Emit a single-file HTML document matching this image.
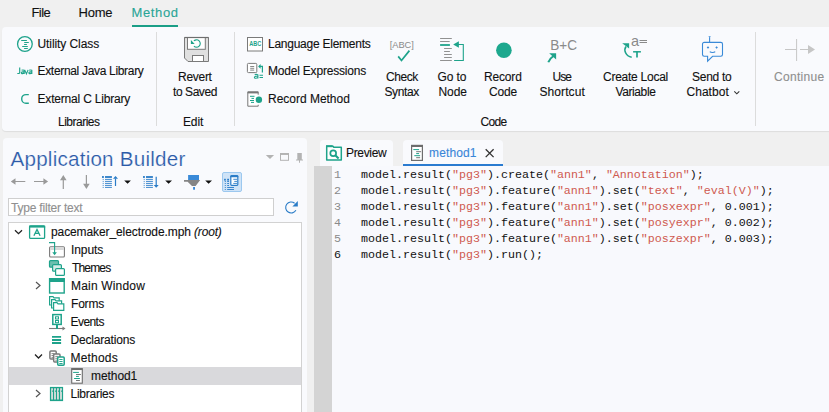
<!DOCTYPE html>
<html><head><meta charset="utf-8">
<style>
*{margin:0;padding:0;box-sizing:border-box}
html,body{width:829px;height:412px;overflow:hidden;background:#f0f0f0;font-family:"Liberation Sans",sans-serif;color:#1e1e1e}
.a{position:absolute;white-space:nowrap;-webkit-text-stroke:0.12px currentColor}
.t{position:absolute;white-space:nowrap;font-size:11.5px;line-height:14px;color:#111}
.c{position:absolute;white-space:nowrap;font-size:11.5px;line-height:14px;text-align:center;color:#111}
.tb{position:absolute;white-space:nowrap;font-size:13px;line-height:16px;top:5px}
.sep{position:absolute;width:1px;background:#dcdcdc;top:32px;height:94px}
.tr{position:absolute;white-space:nowrap;font-size:11.7px;line-height:14px;color:#111}
.code{position:absolute;left:361px;font-family:"Liberation Mono",monospace;font-size:11.667px;line-height:16px;white-space:pre;color:#111}
.ln{position:absolute;left:334px;font-family:"Liberation Mono",monospace;font-size:11.667px;line-height:16px;color:#8a8a8a}
.s{color:#cf5a50}
#ov{position:absolute;left:0;top:0}
</style></head><body>

<!-- ===== backgrounds ===== -->
<div class="a" style="left:132px;top:25px;width:46px;height:2px;background:#1a9e86"></div>
<div class="a" style="left:2px;top:27px;width:840px;height:104px;background:#f9fafd;border-radius:4px;box-shadow:0 1px 1px rgba(0,0,0,0.08)"></div>
<div class="sep" style="left:156px"></div>
<div class="sep" style="left:234px"></div>
<div class="sep" style="left:755px"></div>

<div class="a" style="left:3px;top:138px;width:304px;height:290px;background:#f9fafd;border-radius:4px"></div>
<div class="a" style="left:222px;top:172px;width:20px;height:20px;background:#cfe3f7;border:1px solid #9cc8ef;border-radius:2px"></div>
<div class="a" style="left:8px;top:198px;width:266px;height:18px;background:#fff;border:1px solid #cfcfcf"></div>
<div class="a" style="left:8px;top:222px;width:294px;height:200px;background:#fff;border:1px solid #d2d2d2"></div>
<div class="a" style="left:9px;top:367px;width:292px;height:18px;background:#d9d9dc"></div>

<div class="a" style="left:320px;top:140px;width:73px;height:26px;background:#f9fafd;border-radius:4px 4px 0 0"></div>
<div class="a" style="left:403px;top:140px;width:100px;height:26px;background:#f9fafd;border-radius:4px 4px 0 0"></div>
<div class="a" style="left:403px;top:164px;width:100px;height:2px;background:#2a7bd0"></div>
<div class="a" style="left:314px;top:166px;width:520px;height:250px;background:#f8f9fd"></div>
<div class="a" style="left:314px;top:166px;width:18px;height:250px;background:#d4d4d4"></div>

<!-- ===== icons overlay (page coordinates) ===== -->
<svg id="ov" width="829" height="412" viewBox="0 0 829 412">
 <g fill="none" stroke-linecap="butt">
 <!-- Utility class -->
 <circle cx="24.9" cy="44" r="7.35" stroke="#1ea38b" stroke-width="1.3"/>
 <path d="M21.2 40.5h5.7M24.2 42.5h4.6M24.1 44.5h2.8M22.2 46.5h5.6M24.1 48.5h3.7" stroke="#1ea38b" stroke-width="1.05"/>
 <!-- C library -->
 <path d="M28.8 94.6H26A4.3 4.3 0 0 0 26 103.2H28.8" stroke="#1ea38b" stroke-width="1.4"/>
 </g>
 <path d="M19.7 67.6V72.5Q19.7 73.5 18.6 73.5H17.3M21.6 70.3Q23 69.7 24.2 70.3V74M24.2 71.8H22.7Q21.3 71.8 21.3 72.8Q21.3 73.7 22.6 73.6Q23.6 73.5 24.2 72.9M24.7 69.9L26.4 73.9L28.1 69.9M29.2 70.3Q30.6 69.7 31.8 70.3V74M31.8 71.8H30.3Q28.9 71.8 28.9 72.8Q28.9 73.7 30.2 73.6Q31.2 73.5 31.8 72.9" fill="none" stroke="#1ea38b" stroke-width="1.15"/>

 <!-- floppy -->
 <path d="M184.5 37.5H208.5V61.5H188L184.5 58Z" fill="#e0e0e0" stroke="#7a7a7a" stroke-width="1"/>
 <rect x="187.5" y="37.5" width="17.8" height="11.8" fill="#fff" stroke="#7a7a7a" stroke-width="1"/>
 <path d="M184.5 37.5H208.5" stroke="#6e6e6e" stroke-width="1.2"/>
 <rect x="192.5" y="55.5" width="11" height="6" fill="#fff" stroke="#7a7a7a" stroke-width="1"/>
 <path d="M193.9 46.1A3.7 3.7 0 1 0 193.9 40.9" fill="none" stroke="#1ea38b" stroke-width="1.15"/>
 <path d="M190.9 40.1V44H194.7Z" fill="#1ea38b"/>

 <!-- Language elements -->
 <rect x="247.5" y="37.5" width="15" height="13.5" fill="#fff" stroke="#7a7a7a" stroke-width="1"/>
 <text x="255.2" y="46" font-family="Liberation Sans" font-size="7" font-weight="bold" fill="#1ea38b" text-anchor="middle" textLength="12" lengthAdjust="spacingAndGlyphs">ABC</text>
 <!-- Model expressions -->
 <rect x="247.4" y="63.4" width="9.4" height="9.2" rx="1" fill="#fff" stroke="#7a7a7a" stroke-width="1"/>
 <path d="M250.2 66.5h4M250.2 68.3h4M250.2 70.1h4" stroke="#7a7a7a" stroke-width="0.9"/>
 <path d="M262.4 72.5V66.4H259" fill="none" stroke="#1ea38b" stroke-width="1.2"/>
 <path d="M258.1 66.4L260.6 64V68.8Z" fill="#1ea38b"/>
 <path d="M254.7 74.9Q256.3 73.9 257.9 74.9V78.4M257.9 76.3H256.1Q254.4 76.3 254.4 77.4Q254.4 78.4 256 78.3Q257.3 78.2 257.9 77.3M259.5 75.3H263M259.5 77.5H263" fill="none" stroke="#1ea38b" stroke-width="1.1"/>
 <!-- Record method -->
 <path d="M258.2 94.7V91.8H247.8V106.2H258.2V104.8" fill="#fff" stroke="#777" stroke-width="1"/>
 <path d="M247.8 92.6H258.2" stroke="#777" stroke-width="1.6"/>
 <path d="M250 96.3h4.5M251.5 98.4h2.5M250 100.5h4M251 102.4h3" stroke="#1ea38b" stroke-width="1"/>
 <circle cx="258.9" cy="99.7" r="3.2" fill="#1ea38b"/>

 <!-- Check syntax -->
 <text x="401.8" y="48" font-family="Liberation Sans" font-size="9.5" fill="#8a8a8a" text-anchor="middle" textLength="24.2" lengthAdjust="spacingAndGlyphs">[ABC]</text>
 <path d="M398.2 56.4L401.5 60.5L409.4 50.6" fill="none" stroke="#1ea38b" stroke-width="1.7"/>

 <!-- Go to node -->
 <path d="M440.1 38.5h11.7M440.1 41.5h9.6M444.1 48.5h7.7M444.1 51.5h5.8M444.1 54.5h7.7M444.1 57.5h7.7M440.1 60.5h11.7" stroke="#858585" stroke-width="0.9"/>
 <path d="M440.1 45h9.8" stroke="#1ea38b" stroke-width="1.8"/>
 <path d="M454.1 60.5H463.3V44.5H457" fill="none" stroke="#1ea38b" stroke-width="1.1"/>
 <path d="M453.2 44.5L458.9 41.2V47.8Z" fill="#1ea38b"/>

 <!-- Record code -->
 <circle cx="503.9" cy="50.2" r="7.8" fill="#1da88e"/>

 <!-- Use shortcut -->
 <text x="550.3" y="49.9" font-family="Liberation Sans" font-size="14.3" fill="#8a8a8a" textLength="26.8" lengthAdjust="spacingAndGlyphs">B+C</text>
 <path d="M549.2 53.2H556.1V59.4Z" fill="#1ea38b"/>
 <path d="M553.5 56C550.5 58 549 60 548.3 62.3" fill="none" stroke="#1ea38b" stroke-width="2"/>

 <!-- Create local variable -->
 <text x="631" y="46" font-family="Liberation Sans" font-size="14.5" fill="#8a8a8a">a</text>
 <path d="M639.5 40.5h7.5M639.5 42.5h7.5" stroke="#8a8a8a" stroke-width="1"/>
 <path d="M622.2 43.2H629.1V48.5Z" fill="#1ea38b"/>
 <path d="M626 46.5C623.5 50 625.5 56 631.7 57.2" fill="none" stroke="#1ea38b" stroke-width="1.6"/>
 <path d="M633.1 51.8h7.8" stroke="#1ea38b" stroke-width="1.5"/><path d="M637 51.5V57.6" stroke="#1ea38b" stroke-width="1.7"/>

 <!-- Chatbot -->
 <g stroke="#3a8ad8" stroke-width="1.1" fill="none">
  <path d="M709.6 37.5V42"/>
  <path d="M704.2 42.4H720.8A1.7 1.7 0 0 1 722.5 44.1V54.6A1.7 1.7 0 0 1 720.8 56.3H712.6L707.6 61.2V56.3H704.2A1.7 1.7 0 0 1 702.5 54.6V44.1A1.7 1.7 0 0 1 704.2 42.4Z"/>
  <path d="M709.8 51.6Q710.5 52.5 712.5 52.5Q714.5 52.5 715.2 51.6"/>
 </g>
 <path d="M708.4 36.2H710.8L709.6 38Z" fill="#3a8ad8"/>
 <path d="M708 46.2L709.3 47.5L708 48.8L706.7 47.5Z M716.6 46.2L717.9 47.5L716.6 48.8L715.3 47.5Z" fill="#3a8ad8"/>
 <path d="M734.3 91.3L736.8 93.8L739.3 91.3" fill="none" stroke="#333" stroke-width="1.1"/>

 <!-- Continue -->
 <path d="M785 49.5H796.4M800 49.5H808.4M796.6 39V61" stroke="#c6c6c6" stroke-width="1"/>
 <path d="M808 44.9L815 49.5L808 54Z" fill="#c6c6c6"/>

 <!-- window controls -->
 <path d="M265.8 154.9H274.1L270 159.1Z" fill="#b3b3b3"/>
 <rect x="280.5" y="153.5" width="8" height="6.8" fill="none" stroke="#b3b3b3" stroke-width="1"/>
 <path d="M280 154.2H289" stroke="#b3b3b3" stroke-width="1.5"/>
 <path d="M297.3 153H301.8V159.4H303V160.4H300V162.8H299V160.4H296V159.4H297.3Z" fill="#b3b3b3"/>

 <!-- toolbar -->
 <g stroke="#9a9a9a" stroke-width="1.2" fill="none">
  <path d="M14 181.5H25.3M34 181.5H45M63.3 180V189M86.4 175V184"/>
 </g>
 <path d="M10.8 181.5L15.5 178.3V184.7Z M48.1 181.5L43.4 178.3V184.7Z M63.3 175L60 180.2H66.6Z M86.4 189L83.1 183.8H89.7Z" fill="#9a9a9a"/>
 <g fill="#2a7cc7">
  <rect x="102" y="176.1" width="1.9" height="1.8"/><rect x="105" y="176.1" width="6.9" height="1.8"/>
  <path d="M102.7 179.4h1M102.7 181.4h1M102.7 183.4h1M102.7 185.4h1M102.7 187.4h1" stroke="#2a7cc7" stroke-width="0.9"/>
  <path d="M105 179.4h6.9M105 181.4h6.9M105 183.4h6.9M105 185.4h6.9M105 187.4h6.9" stroke="#2a7cc7" stroke-width="0.9"/>
  <rect x="143" y="176.1" width="1.9" height="1.8"/><rect x="146" y="176.1" width="6.9" height="1.8"/>
  <path d="M143.7 179.4h1M143.7 181.4h1M143.7 183.4h1M143.7 185.4h1M143.7 187.4h1" stroke="#2a7cc7" stroke-width="0.9"/>
  <path d="M146 179.4h6.9M146 181.4h6.9M146 183.4h6.9M146 185.4h6.9M146 187.4h6.9" stroke="#2a7cc7" stroke-width="0.9"/>
 </g>
 <path d="M115.5 186V178.5" stroke="#2a7cc7" stroke-width="1.2"/>
 <path d="M115.5 175.9L113 178.8H118Z" fill="#2a7cc7"/>
 <path d="M156.2 176.7V185" stroke="#2a7cc7" stroke-width="1.2"/>
 <path d="M156.2 187.8L153.7 184.9H158.7Z" fill="#2a7cc7"/>
 <path d="M124.2 180.4H130.9L127.55 183.8Z M165.2 180.4H172L168.6 183.8Z M205.2 180.4H212L208.6 183.8Z" fill="#111"/>
 <rect x="188.1" y="175" width="10.9" height="5" fill="#3a8ad8"/>
 <path d="M184 180H200.2L195.6 186.1H192L187.6 181.8H184Z" fill="#858585"/>
 <rect x="193.1" y="187" width="1.9" height="2.7" fill="#3a8ad8"/>
 <!-- toggle contents -->
 <g fill="#2a7cc7">
  <rect x="224.1" y="178.8" width="1.7" height="1.8"/><rect x="227.2" y="178.8" width="1.8" height="1.8"/>
 </g>
 <path d="M224.8 181.5h1M224.8 183.5h1M224.8 185.5h1M224.8 187.5h1M224.8 189.5h1M227.2 181.5h1.8M227.2 183.5h1.8M227.2 185.5h1.8M227.2 187.5h6.8M227.2 189.5h6.8" stroke="#2a7cc7" stroke-width="0.9"/>
 <rect x="230.8" y="175.7" width="7" height="9.6" rx="0.8" fill="#fff" stroke="#2a7cc7" stroke-width="1.2"/>
 <path d="M230.3 176.6H238.3" stroke="#2a7cc7" stroke-width="1.3"/>
 <path d="M233.3 179.3h3.7M234.3 181.4h2.7M233.3 183.4h3.7" stroke="#2a7cc7" stroke-width="0.9"/>
 <!-- refresh -->
 <path d="M295.9 210.3A5.5 5.5 0 1 1 294.6 203.2" fill="none" stroke="#2a7cc7" stroke-width="1.15"/>
 <path d="M297.8 201.1V206.6H292.4Z" fill="#2a7cc7"/>

 <!-- ===== tree icons ===== -->
 <path d="M15 230.2L18.5 233.7L22 230.2" fill="none" stroke="#222" stroke-width="1.3"/>
 <rect x="29.6" y="225.8" width="15" height="12.6" rx="1" fill="#fff" stroke="#1ea38b" stroke-width="1.3"/>
 <path d="M29 226.6h16.2" stroke="#1ea38b" stroke-width="2"/>
 <path d="M33.9 235.7L37 229.4L40.1 235.7M35.2 233.4H38.8" fill="none" stroke="#1ea38b" stroke-width="1.3"/>
 <!-- Inputs -->
 <rect x="49.6" y="246.8" width="14.8" height="10.2" rx="1" fill="#fff" stroke="#7a7a7a" stroke-width="1.1"/>
 <rect x="50.2" y="247.4" width="13.6" height="2.6" fill="#d9d9d9"/>
 <path d="M49 242.6H54.6V253" fill="none" stroke="#1ea38b" stroke-width="1.1"/>
 <path d="M52.3 252.2H56.9L54.6 255.2Z" fill="#1ea38b"/>
 <!-- Themes -->
 <rect x="49.5" y="260.6" width="9" height="6.6" rx="1" fill="#6bbfae" stroke="#1ea38b" stroke-width="1.2"/>
 <rect x="52.6" y="264.6" width="8.8" height="6.6" rx="1" fill="#d4ece7" stroke="#1ea38b" stroke-width="1.2"/>
 <rect x="55.6" y="268.6" width="8.8" height="6.8" rx="1" fill="#fff" stroke="#1ea38b" stroke-width="1.2"/>
 <!-- Main window -->
 <path d="M36 282L40 285.5L36 289" fill="none" stroke="#555" stroke-width="1.2"/>
 <rect x="49.6" y="278.8" width="14.6" height="14.2" fill="#fff" stroke="#1ea38b" stroke-width="1.4"/>
 <rect x="49" y="278" width="15.8" height="4" fill="#1ea38b"/>
 <!-- Forms -->
 <path d="M49.6 305V296.6H53L54 297.8H59.2V305Z" fill="#fff" stroke="#1ea38b" stroke-width="1.2"/>
 <path d="M51.6 308V299.6H55L56 300.8H61.6V308Z" fill="#fff" stroke="#1ea38b" stroke-width="1.2"/>
 <path d="M53.6 310.3V302.6H57L58 303.8H63.8V310.3Z" fill="#fff" stroke="#1ea38b" stroke-width="1.2"/>
 <!-- Events -->
 <rect x="52.8" y="314.6" width="8.4" height="9.8" fill="#fff" stroke="#1ea38b" stroke-width="1.5"/>
 <rect x="55.5" y="316.8" width="3" height="2.2" fill="none" stroke="#1ea38b" stroke-width="1"/>
 <rect x="55.5" y="320.5" width="3" height="2.2" fill="none" stroke="#1ea38b" stroke-width="1"/>
 <path d="M49 328.5H63" stroke="#7a7a7a" stroke-width="1.1"/>
 <path d="M62.5 326.5L65.5 328.5L62.5 330.5Z" fill="#7a7a7a"/>
 <path d="M57 325V329" stroke="#1ea38b" stroke-width="2"/>
 <!-- Declarations -->
 <path d="M52 336.9h9.1M52 340h9.1M52 343h9.1" stroke="#1ea38b" stroke-width="1.8"/>
 <!-- Methods -->
 <path d="M35 354.5L38.5 358L42 354.5" fill="none" stroke="#222" stroke-width="1.3"/>
 <rect x="49.9" y="351.1" width="6.3" height="8" rx="1" fill="#fff" stroke="#7a7a7a" stroke-width="1.5"/>
 <path d="M51.5 353.6h3M51.5 355.5h3M51.5 357.4h3" stroke="#7a7a7a" stroke-width="0.9"/>
 <rect x="53.7" y="353.9" width="6.3" height="8" rx="1" fill="#fff" stroke="#7a7a7a" stroke-width="1.5"/>
 <path d="M55.3 356.4h3M55.3 358.3h3M55.3 360.2h3" stroke="#7a7a7a" stroke-width="0.9"/>
 <rect x="57.7" y="356.9" width="6.5" height="8.4" rx="1" fill="#fff" stroke="#1ea38b" stroke-width="1.5"/>
 <path d="M59.3 359.5h3.3M59.3 361.5h3.3M59.3 363.5h3.3" stroke="#1ea38b" stroke-width="0.95"/>
 <!-- method1 -->
 <rect x="71.7" y="368.6" width="10.6" height="14.6" fill="#fff" stroke="#6d6d6d" stroke-width="1.1"/>
 <path d="M71.5 369.3h11" stroke="#6d6d6d" stroke-width="1.5"/>
 <path d="M73.1 372.4h5.8M76 376.4h2.9M74.1 378.5h5.8" stroke="#1ea38b" stroke-width="1"/>
 <path d="M76 374.5h4.9M76 380.5h3.9" stroke="#777" stroke-width="1"/>
 <!-- Libraries -->
 <path d="M36 390L40 393.5L36 397" fill="none" stroke="#555" stroke-width="1.2"/>
 <rect x="49.9" y="386.9" width="13.2" height="14.2" fill="#1ea38b"/>
 <path d="M52.05 388.3V399.6M55 388.3V399.6M57.95 388.3V399.6M61 388.3V399.6" stroke="#f4e8ea" stroke-width="1.6"/>
 <path d="M52.9 390.4v1.6M55.8 390.4v1.6M58.8 390.4v1.6M61.8 390.4v1.6" stroke="#1ea38b" stroke-width="1"/>

 <!-- ===== tabs ===== -->
 <path d="M326.7 159.9V146.2H333L333.8 147.2H341.3V159.9Z" fill="#fff" stroke="#1ea38b" stroke-width="1.5" stroke-linejoin="round"/>
 <path d="M326 145.2H332.6V147.2H326Z" fill="#1ea38b"/>
 <circle cx="333.2" cy="153.2" r="2.9" fill="none" stroke="#1ea38b" stroke-width="1.7"/>
 <path d="M335.3 155.3L338.6 158.6" stroke="#1ea38b" stroke-width="2.1"/>
 <rect x="411.6" y="145.4" width="10.8" height="15" fill="#fff" stroke="#6d6d6d" stroke-width="1.2"/>
 <path d="M411 146.2h12" stroke="#6d6d6d" stroke-width="1.6"/>
 <path d="M413.3 149.6h5.8M416.2 153.6h2.9M414.3 155.7h5.8" stroke="#1ea38b" stroke-width="1"/>
 <path d="M416.2 151.7h4.9M416.2 157.7h3.9" stroke="#777" stroke-width="1"/>
 <path d="M485.7 149.2L493.6 157.1M493.6 149.2L485.7 157.1" stroke="#333" stroke-width="1.3"/>
</svg>

<!-- ===== text ===== -->
<div class="a" style="left:31.50px;top:5.00px;font-size:13px;line-height:16px;letter-spacing:-0.600px;color:#111;">File</div>
<div class="a" style="left:78.50px;top:5.00px;font-size:13px;line-height:16px;letter-spacing:-0.200px;color:#111;">Home</div>
<div class="a" style="left:131.50px;top:5.00px;font-size:13px;line-height:16px;letter-spacing:0.640px;color:#2aa597;">Method</div>
<div class="a" style="left:37.50px;top:37.41px;font-size:12px;line-height:15px;letter-spacing:-0.083px;color:#111;">Utility Class</div>
<div class="a" style="left:37.50px;top:64.41px;font-size:12px;line-height:15px;letter-spacing:-0.320px;color:#111;">External Java Library</div>
<div class="a" style="left:37.50px;top:91.81px;font-size:12px;line-height:15px;letter-spacing:-0.188px;color:#111;">External C Library</div>
<div class="a" style="left:58.00px;top:115.00px;font-size:12px;line-height:15px;letter-spacing:-0.500px;color:#111;">Libraries</div>
<div class="a" style="left:178.00px;top:69.50px;font-size:12px;line-height:15px;letter-spacing:-0.280px;color:#111;">Revert</div>
<div class="a" style="left:173.00px;top:85.00px;font-size:12px;line-height:15px;letter-spacing:-0.429px;color:#111;">to Saved</div>
<div class="a" style="left:183.00px;top:115.00px;font-size:12px;line-height:15px;letter-spacing:-0.133px;color:#111;">Edit</div>
<div class="a" style="left:268.00px;top:36.91px;font-size:12px;line-height:15px;letter-spacing:-0.250px;color:#111;">Language Elements</div>
<div class="a" style="left:268.00px;top:63.70px;font-size:12px;line-height:15px;letter-spacing:-0.200px;color:#111;">Model Expressions</div>
<div class="a" style="left:268.00px;top:91.50px;font-size:12px;line-height:15px;letter-spacing:-0.017px;color:#111;">Record Method</div>
<div class="a" style="left:386.00px;top:70.00px;font-size:12px;line-height:15px;letter-spacing:-0.450px;color:#111;">Check</div>
<div class="a" style="left:384.50px;top:85.00px;font-size:12px;line-height:15px;letter-spacing:-0.400px;color:#111;">Syntax</div>
<div class="a" style="left:437.50px;top:70.00px;font-size:12px;line-height:15px;letter-spacing:-0.100px;color:#111;">Go to</div>
<div class="a" style="left:438.50px;top:85.00px;font-size:12px;line-height:15px;letter-spacing:-0.067px;color:#111;">Node</div>
<div class="a" style="left:484.00px;top:70.00px;font-size:12px;line-height:15px;letter-spacing:-0.160px;color:#111;">Record</div>
<div class="a" style="left:489.00px;top:85.00px;font-size:12px;line-height:15px;letter-spacing:-0.133px;color:#111;">Code</div>
<div class="a" style="left:552.50px;top:70.00px;font-size:12px;line-height:15px;letter-spacing:-1.000px;color:#111;">Use</div>
<div class="a" style="left:539.50px;top:85.00px;font-size:12px;line-height:15px;letter-spacing:0.086px;color:#111;">Shortcut</div>
<div class="a" style="left:603.00px;top:70.00px;font-size:12px;line-height:15px;letter-spacing:-0.255px;color:#111;">Create Local</div>
<div class="a" style="left:615.50px;top:85.00px;font-size:12px;line-height:15px;letter-spacing:-0.400px;color:#111;">Variable</div>
<div class="a" style="left:692.00px;top:70.00px;font-size:12px;line-height:15px;letter-spacing:-0.267px;color:#111;">Send to</div>
<div class="a" style="left:686.50px;top:84.61px;font-size:12px;line-height:15px;letter-spacing:0.033px;color:#111;">Chatbot</div>
<div class="a" style="left:480.50px;top:115.00px;font-size:12px;line-height:15px;letter-spacing:-0.667px;color:#111;">Code</div>
<div class="a" style="left:774.00px;top:70.20px;font-size:12px;line-height:15px;letter-spacing:0.314px;color:#8f8f8f;">Continue</div>
<div class="a" style="left:10.50px;top:146.01px;font-size:20.6px;line-height:26px;letter-spacing:0.233px;color:#2b5aa8;-webkit-text-stroke:0.2px #f9fafd;">Application Builder</div>
<div class="a" style="left:11.00px;top:200.70px;font-size:12px;line-height:15px;letter-spacing:-0.200px;color:#909090;">Type filter text</div>
<div class="a" style="left:51.00px;top:224.91px;font-size:12px;line-height:15px;letter-spacing:-0.100px;color:#111;">pacemaker_electrode.mph</div>
<div class="a" style="left:194.00px;top:224.91px;font-size:12px;line-height:15px;letter-spacing:-0.160px;color:#111;font-style:italic">(root)</div>
<div class="a" style="left:71.00px;top:242.70px;font-size:12px;line-height:15px;letter-spacing:-0.080px;color:#111;">Inputs</div>
<div class="a" style="left:72.00px;top:260.70px;font-size:12px;line-height:15px;letter-spacing:-0.840px;color:#111;">Themes</div>
<div class="a" style="left:71.00px;top:278.70px;font-size:12px;line-height:15px;letter-spacing:0.180px;color:#111;">Main Window</div>
<div class="a" style="left:71.00px;top:296.70px;font-size:12px;line-height:15px;letter-spacing:-0.200px;color:#111;">Forms</div>
<div class="a" style="left:70.50px;top:314.70px;font-size:12px;line-height:15px;letter-spacing:-0.560px;color:#111;">Events</div>
<div class="a" style="left:70.50px;top:332.70px;font-size:12px;line-height:15px;letter-spacing:-0.182px;color:#111;">Declarations</div>
<div class="a" style="left:70.50px;top:350.70px;font-size:12px;line-height:15px;letter-spacing:0.200px;color:#111;">Methods</div>
<div class="a" style="left:91.00px;top:368.70px;font-size:12px;line-height:15px;letter-spacing:-0.067px;color:#111;">method1</div>
<div class="a" style="left:70.50px;top:386.70px;font-size:12px;line-height:15px;letter-spacing:-0.250px;color:#111;">Libraries</div>
<div class="a" style="left:346.00px;top:145.81px;font-size:12px;line-height:15px;letter-spacing:-0.333px;color:#111;">Preview</div>
<div class="a" style="left:429.00px;top:146.00px;font-size:12px;line-height:15px;letter-spacing:0.133px;color:#3a86d8;">method1</div>

<div class="ln" style="top:167px">1<br>2<br>3<br>4<br>5<br><span style="color:#111">6</span></div>
<div class="code" style="top:167px">model.result(<span class="s">"pg3"</span>).create(<span class="s">"ann1"</span>, <span class="s">"Annotation"</span>);
model.result(<span class="s">"pg3"</span>).feature(<span class="s">"ann1"</span>).set(<span class="s">"text"</span>, <span class="s">"eval(V)"</span>);
model.result(<span class="s">"pg3"</span>).feature(<span class="s">"ann1"</span>).set(<span class="s">"posxexpr"</span>, 0.001);
model.result(<span class="s">"pg3"</span>).feature(<span class="s">"ann1"</span>).set(<span class="s">"posyexpr"</span>, 0.002);
model.result(<span class="s">"pg3"</span>).feature(<span class="s">"ann1"</span>).set(<span class="s">"poszexpr"</span>, 0.003);
model.result(<span class="s">"pg3"</span>).run();</div>

</body></html>
